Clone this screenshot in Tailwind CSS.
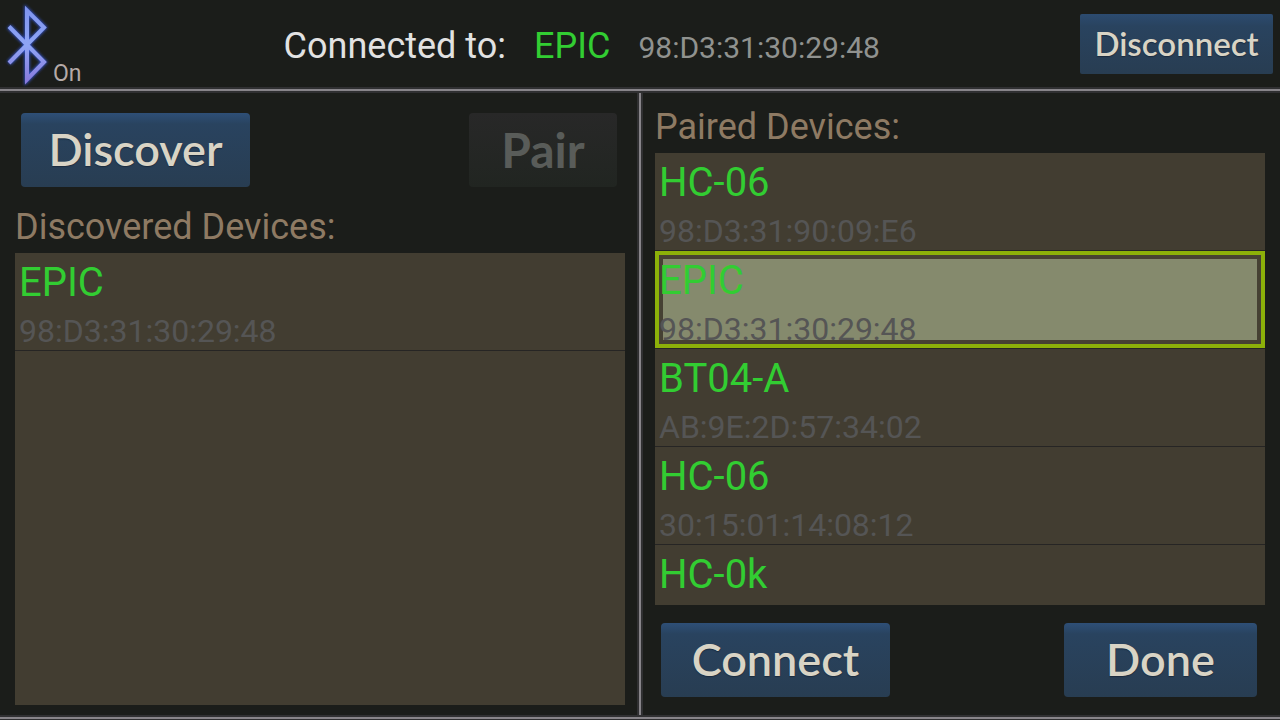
<!DOCTYPE html>
<html lang="en">
<head>
    <meta charset="UTF-8">
    <meta name="viewport" content="width=device-width, initial-scale=1.0">
    <title>Bluetooth Devices</title>
    <script src="https://cdn.jsdelivr.net/npm/@tailwindcss/browser@4"></script>
</head>
<body class="bg-[#1b1d1a] font-['Roboto',sans-serif]">

    <div class="h-screen flex flex-col">

        <header class="flex items-center justify-between pl-1 pr-[7px] h-[87px] shrink-0">
            <div class="flex items-end gap-px">
                <svg class="w-12 h-[87px]" viewBox="4 0 48 87" fill="none">
                    <defs>
                        <linearGradient id="btFill" gradientUnits="userSpaceOnUse" x1="0" y1="6" x2="0" y2="84">
                            <stop offset="0" stop-color="#7e93ee" />
                            <stop offset="0.5" stop-color="#8fa5f4" />
                            <stop offset="1" stop-color="#8878dc" />
                        </linearGradient>
                        <filter id="glow" x="-30%" y="-20%" width="160%" height="140%">
                            <feGaussianBlur stdDeviation="1.6" />
                        </filter>
                    </defs>
                    <path d="M9 26.500 44 62 27 79.500V10.500L44 27.500 9 63" stroke="#3457d8" stroke-width="5" filter="url(#glow)" />
                    <path d="M9 26.500 44 62 27 79.500V10.500L44 27.500 9 63" stroke="url(#btFill)" stroke-width="4" />
                </svg>
                <span class="text-[23px] leading-[26px] text-[#b5aaa8]">On</span>
            </div>
            <div class="flex items-baseline gap-7 pt-1.5 pl-0.5 text-[36px] leading-[52px]">
                <span class="text-[#e2e2e2]">Connected to:</span>
                <span class="text-[#32cd32]">EPIC</span>
                <span class="text-[30px] text-[#90928f]">98:D3:31:30:29:48</span>
            </div>
            <button class="w-[193px] h-15 rounded-xs bg-linear-to-b from-[#2c4b70] via-[#29435f] via-20% to-[#283d52] font-['Lato',sans-serif] font-semibold text-[33px] text-[#d9d4c5] text-shadow-[0_1px_1px_#1b2b3e]">Disconnect</button>
        </header>

        <div class="h-1.5 shrink-0 border-y-2 border-[#303032] bg-[#88858a]"></div>

        <main class="flex-1 min-h-0 flex">
            <section class="flex-1 min-w-0 flex flex-col pl-[15px] pr-3 pt-5 pb-2.5">
                <div class="flex justify-between pl-1.5 pr-2 mb-3.5">
                    <button class="w-[229px] h-[74px] rounded-sm bg-linear-to-b from-[#2e4f77] via-[#29435f] via-15% to-[#283d52] font-['Lato',sans-serif] font-semibold text-[45px] text-[#d9d4c5] text-shadow-[0_1px_1px_#1b2b3e]">Discover</button>
                    <button disabled class="w-[148px] h-[74px] rounded-sm bg-linear-to-b from-[#282828] to-[#212521] font-['Lato',sans-serif] font-bold text-[48px] text-[#595c59]">Pair</button>
                </div>
                <h2 id="discovered" class="text-[36px] leading-[52px] text-[#8e7a63]">Discovered Devices:</h2>
                <ul aria-labelledby="discovered" class="flex-1 min-h-0 overflow-y-auto [scrollbar-width:none] bg-[#423d31]">
                    <li class="border-b border-[#262524]">
                        <button class="block w-full px-1 text-left">
                            <span class="block text-[40px] leading-[59px] text-[#32cd32]">EPIC</span>
                            <span class="block text-[32px] leading-[38px] text-[#555555]">98:D3:31:30:29:48</span>
                        </button>
                    </li>
                </ul>
            </section>

            <div class="w-1.5 shrink-0 border-x-2 border-[#303032] bg-[#88858a]"></div>

            <section class="flex-1 min-w-0 flex flex-col pl-3 pr-[15px] pt-2 pb-[18px]">
                <h2 id="paired" class="text-[36px] leading-[52px] text-[#8e7a63]">Paired Devices:</h2>
                <ul aria-labelledby="paired" class="flex-1 min-h-0 overflow-y-auto [scrollbar-width:none] bg-[#423d31]">
                    <li class="border-b border-[#262524]">
                        <button class="block w-full px-1 text-left">
                            <span class="block text-[40px] leading-[59px] text-[#32cd32]">HC-06</span>
                            <span class="block text-[32px] leading-[38px] text-[#555555]">98:D3:31:90:09:E6</span>
                        </button>
                    </li>
                    <li class="border-b border-[#262524]">
                        <button aria-current="true" class="block w-full px-1 text-left bg-[#858a6d] shadow-[inset_0_0_0_4px_#8cb009,inset_0_0_0_8px_#464133]">
                            <span class="block text-[40px] leading-[59px] text-[#32cd32]">EPIC</span>
                            <span class="block text-[32px] leading-[38px] text-[#555555]">98:D3:31:30:29:48</span>
                        </button>
                    </li>
                    <li class="border-b border-[#262524]">
                        <button class="block w-full px-1 text-left">
                            <span class="block text-[40px] leading-[59px] text-[#32cd32]">BT04-A</span>
                            <span class="block text-[32px] leading-[38px] text-[#555555]">AB:9E:2D:57:34:02</span>
                        </button>
                    </li>
                    <li class="border-b border-[#262524]">
                        <button class="block w-full px-1 text-left">
                            <span class="block text-[40px] leading-[59px] text-[#32cd32]">HC-06</span>
                            <span class="block text-[32px] leading-[38px] text-[#555555]">30:15:01:14:08:12</span>
                        </button>
                    </li>
                    <li>
                        <button class="block w-full px-1 text-left">
                            <span class="block text-[40px] leading-[59px] text-[#32cd32]">HC-0k</span>
                        </button>
                    </li>
                </ul>
                <div class="flex justify-between pl-1.5 pr-2 mt-[18px]">
                    <button class="w-[229px] h-[74px] rounded-sm bg-linear-to-b from-[#2e4f77] via-[#29435f] via-15% to-[#283d52] font-['Lato',sans-serif] font-semibold text-[45px] text-[#d9d4c5] text-shadow-[0_1px_1px_#1b2b3e]">Connect</button>
                    <button class="w-[193px] h-[74px] rounded-sm bg-linear-to-b from-[#2e4f77] via-[#29435f] via-15% to-[#283d52] font-['Lato',sans-serif] font-semibold text-[45px] text-[#d9d4c5] text-shadow-[0_1px_1px_#1b2b3e]">Done</button>
                </div>
            </section>
        </main>

        <div class="h-[5px] shrink-0 border-t-2 border-b border-[#303032] bg-[#88858a]"></div>
    </div>

</body>
</html>
